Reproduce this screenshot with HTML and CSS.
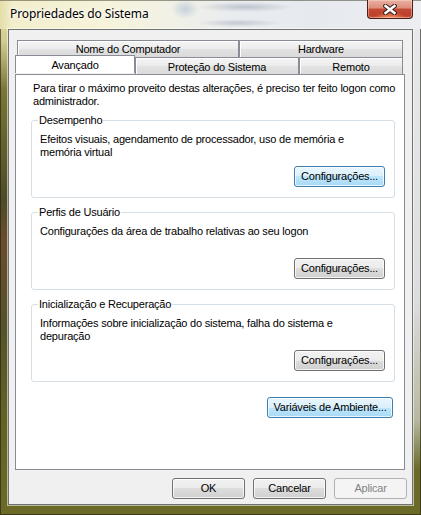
FILE: index.html
```html
<!DOCTYPE html>
<html lang="pt-BR">
<head>
    <meta charset="UTF-8">
    <meta name="viewport" content="width=device-width, initial-scale=1.0">
    <title>Propriedades do Sistema</title>
    <link rel="stylesheet" href="styles.css">
</head>
<body>
    <div class="window">
        <div class="titlebar">
            <span class="title">Propriedades do Sistema</span>
            <button class="close" aria-label="Fechar">
                <svg width="14" height="11" viewBox="0 0 14 11">
                    <path d="M2.5 2 L11.5 9 M11.5 2 L2.5 9" stroke="#3b2620" stroke-width="4.6" stroke-linecap="square" fill="none"/>
                    <path d="M2.5 2 L11.5 9 M11.5 2 L2.5 9" stroke="#ffffff" stroke-width="2.4" stroke-linecap="square" fill="none"/>
                </svg>
            </button>
        </div>

        <div class="client">
            <div class="tabs">
                <div class="tab-row back">
                    <div class="tab tab-nome">Nome do Computador</div>
                    <div class="tab tab-hardware">Hardware</div>
                </div>
                <div class="tab-row front">
                    <div class="tab tab-avancado selected">Avançado</div>
                    <div class="tab tab-protecao">Proteção do Sistema</div>
                    <div class="tab tab-remoto">Remoto</div>
                </div>
            </div>

            <div class="panel">
                <p class="intro">Para tirar o máximo proveito destas alterações, é preciso ter feito logon como<br>administrador.</p>

                <fieldset class="group">
                    <legend>Desempenho</legend>
                    <p>Efeitos visuais, agendamento de processador, uso de memória e<br>memória virtual</p>
                    <div class="group-actions">
                        <button class="btn hot">Configurações...</button>
                    </div>
                </fieldset>

                <fieldset class="group">
                    <legend>Perfis de Usuário</legend>
                    <p>Configurações da área de trabalho relativas ao seu logon</p>
                    <div class="group-actions">
                        <button class="btn">Configurações...</button>
                    </div>
                </fieldset>

                <fieldset class="group">
                    <legend>Inicialização e Recuperação</legend>
                    <p>Informações sobre inicialização do sistema, falha do sistema e<br>depuração</p>
                    <div class="group-actions">
                        <button class="btn">Configurações...</button>
                    </div>
                </fieldset>

                <div class="env">
                    <button class="btn hot env-btn">Variáveis de Ambiente...</button>
                </div>
            </div>

            <div class="dialog-buttons">
                <button class="btn">OK</button>
                <button class="btn">Cancelar</button>
                <button class="btn" disabled>Aplicar</button>
            </div>
        </div>
    </div>
</body>
</html>
```

FILE: styles.css
```css
* {
    box-sizing: border-box;
}
body {
    margin: 0;
    font-family: "Liberation Sans", Arial, sans-serif;
    font-size: 11px;
    line-height: 13px;
    letter-spacing: -0.2px;
    color: #000;
}
p {
    margin: 0;
    white-space: nowrap;
}

/* moldura da janela (vidro) */
.window {
    width: 421px;
    height: 515px;
    display: flex;
    flex-direction: column;
    padding: 0 8px 10px;
    background:
        linear-gradient(#e6e0ad 0, #d4cd92 40px, #7a7636 90px, #4d4b28 200px, #6a4c2c 240px, #55532a 330px, #636225 420px, #6b6a28 100%) left top / 8px 100% no-repeat,
        linear-gradient(#e9eaec 0, #dcdddf 300px, #b8b8a0 420px, #6b6a28 470px, #6b6a28 100%) right top / 8px 100% no-repeat,
        #6b6a28;
    box-shadow: inset 0 0 0 1px rgba(30, 30, 10, 0.6);
}
.titlebar {
    height: 29px;
    margin: 0 -8px;
    padding: 0 8px;
    display: flex;
    justify-content: space-between;
    align-items: flex-start;
    background:
        radial-gradient(ellipse 48px 5px at 245px 7px, rgba(110, 120, 140, 0.35), transparent),
        radial-gradient(ellipse 42px 4px at 238px 23px, rgba(110, 120, 140, 0.3), transparent),
        radial-gradient(ellipse 14px 10px at 185px 9px, rgba(100, 140, 190, 0.3), transparent),
        linear-gradient(to right, #e4dea8 0, #f2eecc 3%, #f6f3da 25%, #f2f1e6 40%, #e9ecef 55%, #e6e9ee 75%, #eceef1 100%);
    box-shadow: inset 0 1px 0 rgba(60, 60, 40, 0.5);
}
.title {
    margin: 6px 0 0 2px;
    font-family: "Noto Sans", sans-serif;
    font-size: 12px;
    line-height: 16px;
    letter-spacing: -0.1px;
    text-shadow: 0 0 6px #fff, 0 0 3px #fff;
}
.close {
    width: 46px;
    height: 19px;
    margin: 0;
    padding: 0;
    display: flex;
    align-items: center;
    justify-content: center;
    border: 1px solid #4a1f17;
    border-top: none;
    border-radius: 0 0 4px 4px;
    background:
        radial-gradient(ellipse 16px 6px at 50% 100%, rgba(255, 170, 110, 0.8), transparent),
        linear-gradient(#eab0a2 0, #de8c7b 45%, #c44a35 50%, #bd3f2a 85%, #c85a40 100%);
    box-shadow: inset 0 0 0 1px rgba(255, 230, 220, 0.4);
}

/* área cliente */
.client {
    flex: 1;
    display: flex;
    flex-direction: column;
    padding: 10px 0 0 6px;
    background: #f0f0f0;
    border: 1px solid #6f7276;
    box-shadow: 0 0 0 1px rgba(255, 255, 240, 0.55);
}

/* abas */
.tabs {
    width: 386px;
    margin-left: 2px;
}
.tab-row {
    display: flex;
    height: 17px;
    align-items: flex-start;
}
.tab-row.front {
    margin-left: -2px;
}
.tab {
    height: 17px;
    text-align: center;
    line-height: 16px;
    border: 1px solid #898c95;
    border-bottom: none;
    background: linear-gradient(#f5f5f5, #ebebeb 50%, #e2e2e2 50%, #dadada);
    box-shadow: inset 1px 1px 0 #fff;
}
.tab-row.front .tab {
    height: 18px;
}
.tab-nome { width: 222px; }
.tab-hardware { width: 164px; }
.tab-avancado { width: 120px; }
.tab-protecao { width: 164px; padding-top: 1px; }
.tab-remoto { width: 104px; padding-top: 1px; }
.tab.selected {
    position: relative;
    z-index: 1;
    height: 20px;
    margin-top: -2px;
    background: #fff;
    box-shadow: none;
    line-height: 18px;
}

/* painel */
.panel {
    width: 390px;
    height: 396px;
    padding: 7px 9px 0 15px;
    background: #fff;
    border: 1px solid #898c95;
}
.intro {
    margin-left: 2px;
}
.group {
    margin: 6px 0 0;
    padding: 6px 9px 10px 8px;
    border: 1px solid #d5dfe5;
    border-radius: 3px;
    box-shadow: inset 1px 1px 0 #fff;
}
.group:first-of-type {
    margin-top: 6px;
}
.group + .group {
    margin-top: 8px;
}
.group legend {
    margin-left: -2px;
    padding: 0 1px;
    line-height: 13px;
}
.group p {
    height: 26px;
}
.group-actions {
    display: flex;
    justify-content: flex-end;
    margin-top: 7px;
}
.env {
    display: flex;
    justify-content: flex-end;
    margin: 15px 2px 0 0;
}

/* botões estilo Windows 7 */
.btn {
    height: 21px;
    padding: 0 4px;
    font: inherit;
    letter-spacing: inherit;
    color: #000;
    border: 1px solid #707070;
    border-radius: 3px;
    background: linear-gradient(#f2f2f2 0, #ebebeb 50%, #dddddd 50%, #cfcfcf 100%);
    box-shadow: inset 0 0 0 1px rgba(255, 255, 255, 0.75);
}
.group .btn {
    width: 91px;
}
.btn.hot {
    border-color: #3c7fb1;
    background: linear-gradient(#eaf6fd 0, #d9f0fc 50%, #bee6fd 50%, #a7d9f5 100%);
}
.env-btn {
    width: 126px;
}
.btn:disabled {
    color: #838383;
    border-color: #adb2b5;
    background: #f4f4f4;
    box-shadow: none;
}
.dialog-buttons {
    display: flex;
    justify-content: flex-end;
    gap: 8px;
    margin-top: 8px;
    padding-right: 5px;
}
.dialog-buttons .btn {
    width: 73px;
}
```
